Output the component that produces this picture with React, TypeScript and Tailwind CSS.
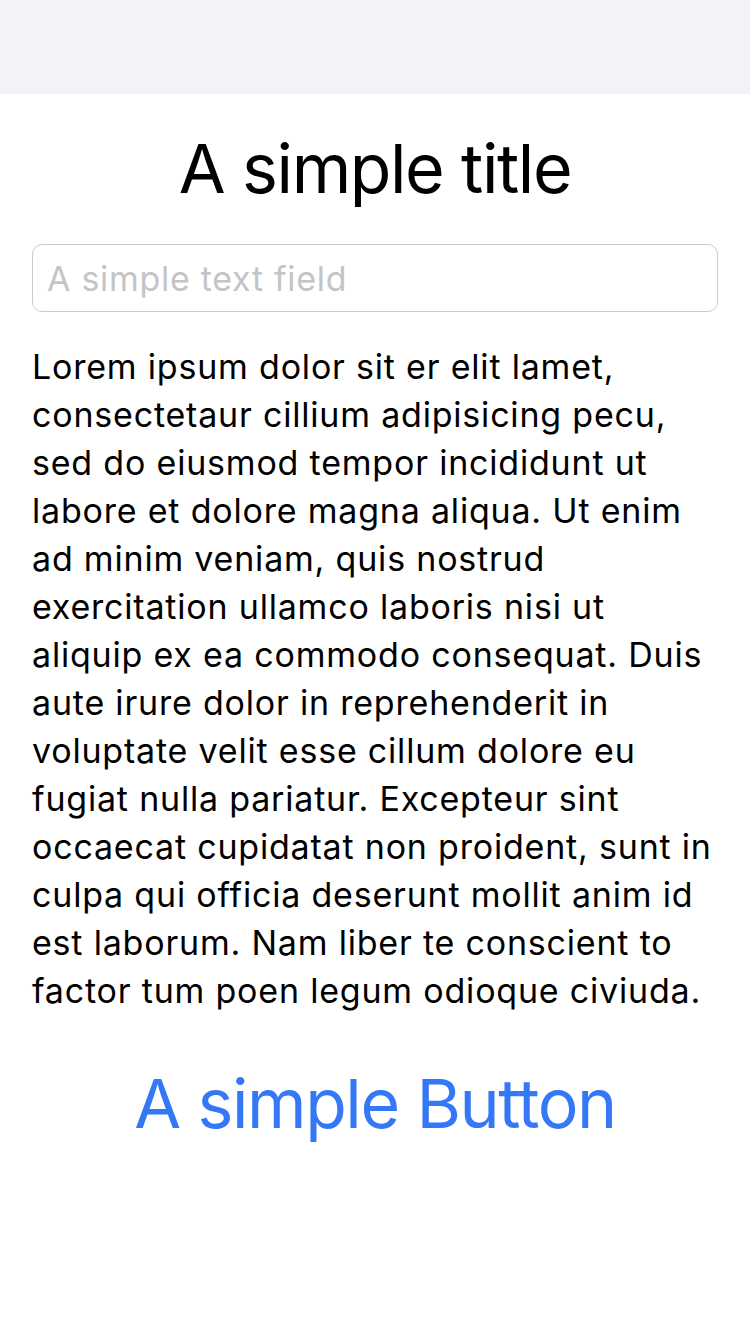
const lines = [
  "Lorem ipsum dolor sit er elit lamet,",
  "consectetaur cillium adipisicing pecu,",
  "sed do eiusmod tempor incididunt ut",
  "labore et dolore magna aliqua. Ut enim",
  "ad minim veniam, quis nostrud",
  "exercitation ullamco laboris nisi ut",
  "aliquip ex ea commodo consequat. Duis",
  "aute irure dolor in reprehenderit in",
  "voluptate velit esse cillum dolore eu",
  "fugiat nulla pariatur. Excepteur sint",
  "occaecat cupidatat non proident, sunt in",
  "culpa qui officia deserunt mollit anim id",
  "est laborum. Nam liber te conscient to",
  "factor tum poen legum odioque civiuda.",
];

export default function App() {
  return (
    <div className="min-h-[1334px] bg-white font-['Inter',sans-serif] text-black">
      <div className="h-[94px] bg-[#f2f2f7]" />
      <div className="px-8 flex flex-col">
        <h1 className="mt-[34px] text-center text-[68px] leading-[80px] tracking-[-1.4px]">A simple title</h1>
        <input
          className="mt-[36px] h-[68px] w-full rounded-[10px] border border-[#cccccc] px-[14px] text-[34px] tracking-[0.7px] outline-none placeholder:text-[#c4c4c6]"
          placeholder="A simple text field"
        />
        <p className="mt-[31px] text-[34px] leading-[48px] tracking-[0.8px]">
          {lines.map((l) => (
            <span key={l} className="block whitespace-nowrap">{l}</span>
          ))}
        </p>
        <button className="mt-[48px] text-center text-[68px] leading-[80px] text-[#3478f6] tracking-[-1.4px]">
          A simple Button
        </button>
      </div>
    </div>
  );
}
